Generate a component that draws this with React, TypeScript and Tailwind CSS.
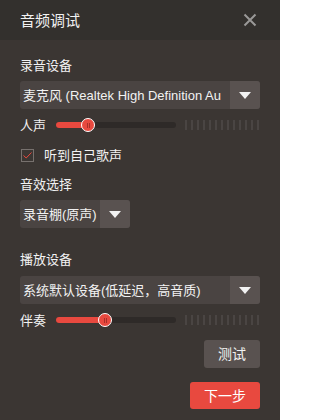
const font = "font-['Liberation_Sans','Noto_Sans_CJK_SC',sans-serif]";

function Caret() {
  return (
    <svg width="12" height="7" viewBox="0 0 12 7">
      <path d="M0 0H12L6 7Z" fill="#f2f2f2" />
    </svg>
  );
}

function CloseIcon() {
  return (
    <svg width="14" height="14" viewBox="0 0 14 14">
      <path d="M1.5 1.5L12.5 12.5M12.5 1.5L1.5 12.5" stroke="#9a9897" strokeWidth="2" />
    </svg>
  );
}

function Select({ value, width }: { value: string; width: string }) {
  return (
    <div className={`flex h-[28px] ${width} overflow-hidden rounded-[3px] bg-[#4a4442]`}>
      <div className="flex min-w-0 flex-1 items-center overflow-hidden whitespace-nowrap pl-[3px] text-[13px] leading-none text-[#f2f2f2]">
        {value}
      </div>
      <div className="flex w-[30px] shrink-0 items-center justify-center bg-[#595250]">
        <Caret />
      </div>
    </div>
  );
}

function Meter() {
  return (
    <div className="flex h-[10px] items-stretch gap-[4px]">
      {Array.from({ length: 13 }).map((_, i) => (
        <div key={i} className="w-[2px] bg-[#4a4543]" />
      ))}
    </div>
  );
}

function VolumeRow({ label, percent }: { label: string; percent: number }) {
  return (
    <div className="flex h-[20px] items-center">
      <span className="w-[36px] text-[13px] leading-none text-[#f2f2f2]">{label}</span>
      <div className="relative h-[6px] w-[120px] rounded-full bg-[#2e2a28]">
        <div className="h-full rounded-full bg-[#e8493f]" style={{ width: `${percent}%` }} />
        <div
          className="absolute top-1/2 flex h-[14px] w-[14px] -translate-x-1/2 -translate-y-1/2 items-center justify-center gap-[1px] rounded-full border border-white bg-[#e8493f]"
          style={{ left: `${percent}%` }}
        >
          <div className="h-[5px] w-px bg-[#a8302a]" />
          <div className="h-[5px] w-px bg-[#a8302a]" />
        </div>
      </div>
      <div className="ml-[9px]">
        <Meter />
      </div>
    </div>
  );
}

export default function App() {
  return (
    <div className={`h-[420px] w-[280px] bg-[#3b3633] ${font}`}>
      <div className="flex h-[40px] items-center justify-between bg-[#33302d] pl-[20px] pr-[23px]">
        <span className="text-[15px] leading-none text-[#f2f2f2]">音频调试</span>
        <CloseIcon />
      </div>

      <div className="flex flex-col px-[20px]">
        <div className="mt-[18px] text-[13px] leading-[15px] text-[#f2f2f2]">录音设备</div>
        <div className="mt-[8px]">
          <Select value="麦克风 (Realtek High Definition Au" width="w-[240px]" />
        </div>
        <div className="mt-[6px]">
          <VolumeRow label="人声" percent={27} />
        </div>

        <div className="mt-[14px] flex items-center">
          <div className="ml-px flex h-[13px] w-[13px] items-center justify-center border border-[#77716e]">
            <svg width="9" height="7" viewBox="0 0 9 7">
              <path d="M0.5 3.5L3.2 6L8.5 0.5" stroke="#e8493f" strokeWidth="1" fill="none" />
            </svg>
          </div>
          <span className="ml-[10px] text-[13px] leading-none text-[#f2f2f2]">听到自己歌声</span>
        </div>

        <div className="mt-[15px] text-[13px] leading-[15px] text-[#f2f2f2]">音效选择</div>
        <div className="mt-[8px]">
          <Select value="录音棚(原声)" width="w-[110px]" />
        </div>

        <div className="mt-[24px] text-[13px] leading-[15px] text-[#f2f2f2]">播放设备</div>
        <div className="mt-[9px]">
          <Select value="系统默认设备(低延迟，高音质)" width="w-[240px]" />
        </div>
        <div className="mt-[6px]">
          <VolumeRow label="伴奏" percent={41} />
        </div>

        <div className="mt-[10px] flex justify-end">
          <button className="h-[28px] w-[56px] rounded-[3px] bg-[#595250] text-[14px] leading-none text-[#f2f2f2]">
            测试
          </button>
        </div>
        <div className="mt-[14px] flex justify-end">
          <button className="h-[27px] w-[70px] rounded-[3px] bg-[#e8493f] text-[14px] leading-none text-white">
            下一步
          </button>
        </div>
      </div>
    </div>
  );
}
